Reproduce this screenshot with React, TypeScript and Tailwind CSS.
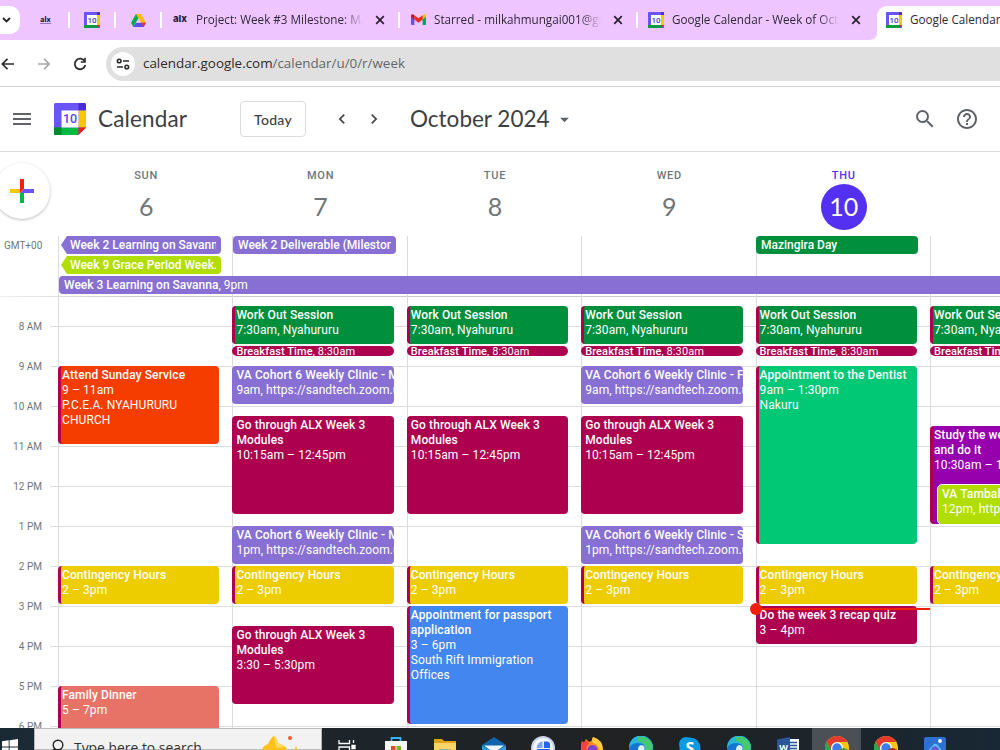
import type { ReactNode } from 'react';
import clsx from 'clsx';
import { MdArrowDropDown, MdChevronLeft, MdChevronRight, MdHelpOutline, MdMenu, MdSearch } from 'react-icons/md';

type CalEvent = {
  title: string;
  detail?: string;
  place?: string;
  start: number;
  end: number;
  color: string;
  stripe?: boolean;
  inline?: boolean;
  nested?: boolean;
};

type Day = { name: string; date: number; today?: boolean; events: CalEvent[] };

const CRIMSON = 'bg-[#ad004e]';
const PURPLE = 'bg-[#876fd3]';
const GREEN = 'bg-[#008f3c]';
const YELLOW = 'bg-[#eecd00]';

const FIRST_HOUR = 7.25;

const workout: CalEvent = { title: 'Work Out Session', detail: '7:30am, Nyahururu', start: 7.5, end: 8.5, color: GREEN, stripe: true };
const breakfast: CalEvent = { title: 'Breakfast Time', detail: ', 8:30am', start: 8.5, end: 8.75, color: CRIMSON, inline: true };
const modules: CalEvent = { title: 'Go through ALX Week 3 Modules', detail: '10:15am – 12:45pm', start: 10.25, end: 12.75, color: CRIMSON };
const contingency: CalEvent = { title: 'Contingency Hours', detail: '2 – 3pm', start: 14, end: 15, color: YELLOW, stripe: true };

const clinic = (start: number, time: string, suffix: string): CalEvent => ({
  title: `VA Cohort 6 Weekly Clinic - ${suffix}`,
  detail: `${time}, https://sandtech.zoom.us`,
  start,
  end: start + 1,
  color: PURPLE,
});

const days: Day[] = [
  {
    name: 'SUN',
    date: 6,
    events: [
      { title: 'Attend Sunday Service', detail: '9 – 11am', place: 'P.C.E.A. NYAHURURU CHURCH', start: 9, end: 11, color: 'bg-[#f63d00]', stripe: true },
      contingency,
      { title: 'Family Dinner', detail: '5 – 7pm', start: 17, end: 19, color: 'bg-[#e67365]', stripe: true },
    ],
  },
  {
    name: 'MON',
    date: 7,
    events: [
      workout,
      breakfast,
      clinic(9, '9am', 'M'),
      modules,
      clinic(13, '1pm', 'M'),
      contingency,
      { title: 'Go through ALX Week 3 Modules', detail: '3:30 – 5:30pm', start: 15.5, end: 17.5, color: CRIMSON },
    ],
  },
  {
    name: 'TUE',
    date: 8,
    events: [
      workout,
      breakfast,
      modules,
      contingency,
      { title: 'Appointment for passport application', detail: '3 – 6pm', place: 'South Rift Immigration Offices', start: 15, end: 18, color: 'bg-[#4386ef]', stripe: true },
    ],
  },
  {
    name: 'WED',
    date: 9,
    events: [workout, breakfast, clinic(9, '9am', 'F'), modules, clinic(13, '1pm', 'S'), contingency],
  },
  {
    name: 'THU',
    date: 10,
    today: true,
    events: [
      workout,
      breakfast,
      { title: 'Appointment to the Dentist', detail: '9am – 1:30pm', place: 'Nakuru', start: 9, end: 13.5, color: 'bg-[#00c875]', stripe: true },
      contingency,
      { title: 'Do the week 3 recap quiz', detail: '3 – 4pm', start: 15, end: 16, color: CRIMSON },
    ],
  },
  {
    name: 'FRI',
    date: 11,
    events: [
      workout,
      breakfast,
      { title: 'Study the week 3 materials and do it', detail: '10:30am – 1pm', start: 10.5, end: 13, color: 'bg-[#9600ad]', stripe: true },
      { title: 'VA Tambali', detail: '12pm, https://sandtech', start: 12, end: 13, color: 'bg-[#b1dd00]', nested: true },
      contingency,
    ],
  },
];

const hours = ['8 AM', '9 AM', '10 AM', '11 AM', '12 PM', '1 PM', '2 PM', '3 PM', '4 PM', '5 PM', '6 PM'];

function CalendarLogo() {
  return (
    <svg width="32" height="32" viewBox="0 0 32 32" className="shrink-0">
      <rect width="32" height="32" rx="1.5" fill="#6a55f8" />
      <path d="M24.5 0H30.5A1.5 1.5 0 0 1 32 1.5V7.5H24.5Z" fill="#4a2bd6" />
      <rect x="24.5" y="7.5" width="7.5" height="17" fill="#f5c800" />
      <path d="M0 24.5H24.5V32H1.5A1.5 1.5 0 0 1 0 30.5Z" fill="#00b944" />
      <path d="M0 24.5H7.5V32H1.5A1.5 1.5 0 0 1 0 30.5Z" fill="#008a2c" />
      <path d="M32 24.5V32H24.5Z" fill="#fff" />
      <path d="M24.5 24.5H32L24.5 32Z" fill="#f4200c" />
      <rect x="7.5" y="7.5" width="17" height="17" fill="#fff" />
      <text x="16" y="20.3" textAnchor="middle" fontSize="12.5" fontFamily="Roboto, sans-serif" fontWeight="500" fill="#5a43ee">
        10
      </text>
    </svg>
  );
}

function CalendarFavicon() {
  return (
    <svg width="16" height="16" viewBox="0 0 16 16" className="shrink-0">
      <rect width="16" height="16" rx=".5" fill="#6a55f8" />
      <path d="M13 0H15.500L16 .5V3H13Z" fill="#4a2bd6" />
      <rect x="13" y="3" width="3" height="10" fill="#f5c800" />
      <rect y="13" width="13" height="3" fill="#0a9c44" />
      <path d="M13 13H16L13 16Z" fill="#f4200c" />
      <rect x="3" y="3" width="10" height="10" fill="#fff" />
      <text x="8" y="10.900" textAnchor="middle" fontSize="8" fontFamily="Roboto, sans-serif" fontWeight="500" fill="#4034c8">
        10
      </text>
    </svg>
  );
}

function GmailLogo() {
  return (
    <svg width="15" height="11" viewBox="0 0 15 11">
      <path d="M0 2V10Q0 11 1 11H3.4V4.2Z" fill="#6a4df5" />
      <path d="M15 2V10Q15 11 14 11H11.6V4.2Z" fill="#00a94f" />
      <path d="M11.6 1.2V5.5L15 3V1.6Q14.5-.6 12.6.5Z" fill="#f5c400" />
      <path d="M3.4 5.6V1.2L7.5 4.3L11.6 1.2V5.6L7.5 8.7Z" fill="#ee2a1c" />
      <path d="M0 3L3.4 5.6V1.2L2.4.5Q.4-.6 0 1.6Z" fill="#c01525" />
    </svg>
  );
}

function DriveLogo() {
  return (
    <svg width="15" height="13" viewBox="0 0 15 13">
      <path d="M5 0H10L5 8.5L2.4 13L0 8.7Z" fill="#00ac47" />
      <path d="M5 0H10L15 8.7H10Z" fill="#fbbc04" />
      <path d="M2.4 13L5 8.7H15L12.6 13Z" fill="#5b4bf5" />
      <path d="M10 8.7H15L12.6 13Z" fill="#ea3323" />
      <path d="M7.5 4.4L10 8.7H5Z" fill="#efc5ff" />
    </svg>
  );
}

function AlxMark({ underline }: { underline?: boolean }) {
  return (
    <span
      className={clsx(
        'font-[Inter,sans-serif] font-extrabold leading-none text-[#231d45]',
        underline ? 'border-b border-[#8a78c8] text-[7px]' : 'pb-0.5 text-[9.5px]',
      )}
    >
      alx
    </span>
  );
}

function CloseIcon() {
  return (
    <svg width="10" height="10" viewBox="0 0 10 10" className="shrink-0">
      <path d="M1.2 1.2L8.8 8.8M8.8 1.2L1.2 8.8" stroke="#2a2030" strokeWidth="1.7" />
    </svg>
  );
}

const TabLine = () => <div className="h-4 w-0.5 shrink-0 bg-white" />;

function TabTitle({ title }: { title: string }) {
  return (
    <div className="w-[167px] overflow-hidden whitespace-nowrap text-[11.7px] [mask-image:linear-gradient(to_right,black_88%,transparent)]">
      {title}
    </div>
  );
}

function Tab({ icon, title }: { icon: ReactNode; title: string }) {
  return (
    <div className="flex w-[236px] shrink-0 items-center pl-[11px]">
      <div className="flex w-[23px] items-center">{icon}</div>
      <TabTitle title={title} />
      <div className="ml-3">
        <CloseIcon />
      </div>
    </div>
  );
}

function TabStrip() {
  return (
    <div className="flex h-10 shrink-0 items-center bg-[#efc5ff] font-['Open_Sans',sans-serif] text-[#2f2838]">
      <div className="flex h-7 w-5 shrink-0 items-center rounded-r-[10px] bg-white pl-0.5">
        <svg width="9" height="6" viewBox="0 0 9 6">
          <path d="M1 1L4.5 4.5L8 1" fill="none" stroke="#222" strokeWidth="1.8" />
        </svg>
      </div>
      <div className="flex w-12 shrink-0 justify-center pl-[3px]">
        <AlxMark underline />
      </div>
      <TabLine />
      <div className="flex w-11 shrink-0 justify-center">
        <CalendarFavicon />
      </div>
      <TabLine />
      <div className="flex w-11 shrink-0 justify-center">
        <DriveLogo />
      </div>
      <TabLine />
      <Tab icon={<AlxMark />} title="Project: Week #3 Milestone: Man" />
      <TabLine />
      <Tab icon={<GmailLogo />} title="Starred - milkahmungai001@gma" />
      <TabLine />
      <div className="flex w-[240px] shrink-0 items-center pl-[10px]">
        <div className="w-6">
          <CalendarFavicon />
        </div>
        <TabTitle title="Google Calendar - Week of Octo" />
        <div className="ml-3">
          <CloseIcon />
        </div>
      </div>
      <svg width="10" height="10" viewBox="0 0 10 10" className="-ml-2.5 -mr-px shrink-0 self-end">
        <path d="M10 0V10H0Q10 10 10 0Z" fill="#fff" />
      </svg>
      <div className="mt-1.5 flex h-[34px] flex-1 items-center overflow-hidden whitespace-nowrap rounded-tl-[10px] bg-white pb-1.5 pl-[9px] text-[11.7px]">
        <CalendarFavicon />
        <span className="ml-2">Google Calendar - Week</span>
      </div>
    </div>
  );
}

function AddressBar() {
  return (
    <div className="flex h-[47px] shrink-0 items-center border-b border-[#cfcfcf] bg-white pt-px">
      <div className="flex w-[106px] items-center">
        <svg width="14" height="14" viewBox="0 0 14 14">
          <path d="M14 7H2.5M7.5 1.8L2.3 7L7.5 12.2" fill="none" stroke="#2b2b2b" strokeWidth="1.7" />
        </svg>
        <svg width="13" height="14" viewBox="0 0 13 14" className="ml-6">
          <path d="M0 7H11M6 1.8L11.2 7L6 12.2" fill="none" stroke="#a5a5a5" strokeWidth="1.6" />
        </svg>
        <svg width="14" height="14" viewBox="0 0 14 14" className="ml-[22px]">
          <path d="M11.7 4.3A5.3 5.3 0 1 0 12.3 8" fill="none" stroke="#2b2b2b" strokeWidth="1.8" />
          <path d="M12.8.8V5.8H7.8V4.2H11.2V.8Z" fill="#2b2b2b" />
        </svg>
      </div>
      <div className="flex h-[34px] flex-1 items-center rounded-l-full bg-[#e0e0e0] pl-[5px]">
        <div className="flex size-6 items-center justify-center rounded-full bg-white">
          <svg width="14" height="12" viewBox="0 0 14 12" fill="none" stroke="#2b2b2b" strokeWidth="1.6">
            <circle cx="3.2" cy="3" r="1.8" />
            <path d="M7 3H13M1 9H7" />
            <circle cx="10.8" cy="9" r="1.8" />
          </svg>
        </div>
        <span className="ml-2 font-['Open_Sans',sans-serif] text-[13.4px] text-[#2b2b2b]">
          calendar.google.com<span className="text-[#666]">/calendar/u/0/r/week</span>
        </span>
      </div>
    </div>
  );
}

function AppHeader() {
  return (
    <header className="flex h-[65px] shrink-0 items-center border-b border-[#dadce0] font-[Lato,sans-serif] text-[#3c4043]">
      <MdMenu className="ml-2.5 size-6 text-[#5f6368]" />
      <div className="ml-5 flex items-center">
        <CalendarLogo />
        <h1 className="ml-3 w-[142px] text-[22.5px] tracking-[0.15px]">Calendar</h1>
      </div>
      <button className="h-9 w-[66px] rounded border border-[#dadce0] text-[14px] font-medium tracking-[0.3px]">Today</button>
      <MdChevronLeft className="ml-[26px] size-5 text-[#444]" />
      <MdChevronRight className="ml-3 size-5 text-[#444]" />
      <h2 className="ml-[26px] w-[143px] whitespace-nowrap text-[22.5px]">October 2024</h2>
      <MdArrowDropDown className="ml-px size-[21px] text-[#5f6368]" />
      <div className="ml-auto flex items-center gap-[18px] pr-[21px] text-[#5f6368]">
        <MdSearch className="size-6" />
        <MdHelpOutline className="size-6" />
      </div>
    </header>
  );
}

function AllDayChip({ title, className }: { title: string; className: string }) {
  return (
    <div className={clsx('h-[18px] rounded-[4px] pr-[5px] text-[12px] font-medium leading-[18px] text-white', className)}>
      <div className="overflow-hidden whitespace-nowrap">{title}</div>
    </div>
  );
}

function WeekHeader() {
  return (
    <div className="relative shrink-0">
      <div className="flex h-21">
        <div className="w-[58px] shrink-0 pt-[11px]">
          <div className="-ml-1.5 flex size-14 items-center justify-center rounded-full bg-white shadow-[0_1px_3px_rgba(60,64,67,0.35)]">
            <svg width="24" height="24" viewBox="0 0 24 24">
              <path d="M0 10H10V14H0Z" fill="#f5c800" />
              <path d="M10 0H14V10L10 14Z" fill="#f4200c" />
              <path d="M14 10H24V14H10Z" fill="#6a55f8" />
              <path d="M10 14H14V24H10Z" fill="#00b944" />
            </svg>
          </div>
        </div>
        {days.map(day => (
          <div key={day.name} className="flex w-[174.4px] shrink-0 flex-col items-center pl-0.5">
            <div className={clsx('mt-4 text-[11px] font-medium leading-4 tracking-[0.8px]', day.today ? 'text-[#5430f3]' : 'text-[#70757a]')}>
              {day.name}
            </div>
            <div
              className={clsx(
                'flex size-[46px] items-center justify-center rounded-full font-[Lato,sans-serif] text-[25px]',
                day.today ? 'bg-[#5430f3] text-white' : 'text-[#70757a]',
              )}
            >
              {day.date}
            </div>
          </div>
        ))}
      </div>
      <div className="grid h-15">
        <div className="col-start-1 row-start-1 flex">
          <div className="w-[58px] shrink-0 pl-1 text-[10px] leading-[19px] text-[#70757a]">GMT+00</div>
          {days.map(day => (
            <div key={day.name} className="w-[174.4px] shrink-0 border-l border-[#dadce0]" />
          ))}
        </div>
        <div className="col-start-1 row-start-1 flex flex-col gap-0.5 pl-[58px]">
          <div className="flex">
            <AllDayChip title="Week 2 Learning on Savanna" className="ml-[3px] w-40 bg-[#876fd3] pl-[9px] [clip-path:polygon(6px_0,100%_0,100%_100%,6px_100%,0_50%)]" />
            <AllDayChip title="Week 2 Deliverable (Milestone" className="ml-3 w-[163px] bg-[#876fd3] pl-[5px]" />
            <AllDayChip title="Mazingira Day" className="ml-[360px] w-[162px] bg-[#008f3c] pl-[5px]" />
          </div>
          <AllDayChip title="Week 9 Grace Period Week." className="ml-[3px] w-40 bg-[#b1dd00] pl-[9px] [clip-path:polygon(6px_0,100%_0,100%_100%,6px_100%,0_50%)]" />
          <div className="ml-px h-[18px] rounded-l-[4px] bg-[#876fd3] pl-[5px] text-[12px] leading-[18px] text-white">
            <span className="font-medium">Week 3 Learning on Savanna</span>, 9pm
          </div>
        </div>
      </div>
    </div>
  );
}

function EventBlock({ event }: { event: CalEvent }) {
  const row = (event.start - FIRST_HOUR) * 4 + 1;
  const span = (event.end - event.start) * 4;
  const style = { gridRow: `${row} / span ${span}` };

  if (event.inline) {
    return (
      <div
        style={style}
        className={clsx('col-start-1 w-[161.4px] overflow-hidden whitespace-nowrap rounded-full pl-1 text-[11px] leading-[11px] tracking-[0.1px] text-white', event.color)}
      >
        <span className="font-medium">{event.title}</span>
        {event.detail}
      </div>
    );
  }

  return (
    <div
      style={style}
      className={clsx(
        'col-start-1 mb-0.5 overflow-hidden rounded-[4px] pt-0.5 text-[12px] leading-[15px] tracking-[0.1px] text-white',
        event.color,
        event.stripe ? 'border-l-3 border-[#ad004e] pl-px' : 'pl-1',
        event.nested ? '-mt-px ml-[8px] w-[153px] outline outline-white' : 'w-[161.4px]',
      )}
    >
      <div className={clsx('font-medium', span <= 4 && 'whitespace-nowrap')}>{event.title}</div>
      <div className="whitespace-nowrap">{event.detail}</div>
      {event.place && <div>{event.place}</div>}
    </div>
  );
}

function WeekGrid() {
  return (
    <div className="grid h-[432px] shrink-0 overflow-hidden">
      <div className="col-start-1 row-start-1 flex h-[432px] overflow-hidden">
        <div className="w-[50px] shrink-0 pr-2 pt-2.5 text-right text-[10px] text-[#70757a]">
          {hours.map(hour => (
            <div key={hour} className="flex h-10 items-center justify-end">
              {hour}
            </div>
          ))}
        </div>
        <div className="flex-1 pt-[30px]">
          {hours.map(hour => (
            <div key={hour} className="h-10 border-t border-[#dadce0]" />
          ))}
        </div>
      </div>
      <div className="col-start-1 row-start-1 flex h-[432px] overflow-hidden pl-[58px]">
        {days.map(day => (
          <div key={day.name} className="relative w-[174.4px] shrink-0 border-l border-[#dadce0]">
            <div className="-ml-px grid auto-rows-[10px]">
              {day.events.map(event => (
                <EventBlock key={`${event.title}-${event.start}`} event={event} />
              ))}
            </div>
            {day.today && (
              <div className="absolute -left-px top-[307px] flex h-3 w-[174.4px] items-center">
                <div className="absolute -left-1.5 size-3 rounded-full bg-[#f01f0c]" />
                <div className="h-0.5 w-full bg-[#f01f0c]" />
              </div>
            )}
          </div>
        ))}
      </div>
      <div className="col-start-1 row-start-1 h-px bg-linear-to-r from-[#eeeeee] to-[#c8c8c8] to-15%" />
    </div>
  );
}

function EdgeIcon() {
  return (
    <svg width="24" height="24" viewBox="0 0 24 24">
      <circle cx="12" cy="12" r="12" fill="#1277cf" />
      <path d="M0 12A12 12 0 0 1 24 11Q24 17 17 17Q14 16 16 13Q16 7 9 7Q3 7 0 12Z" fill="#29b6d8" />
      <path d="M9 1Q20-1 24 10Q24 17 17 17Q14 16 16 13Q17 7 9 5Z" fill="#45c86e" />
      <path d="M9 14Q9 9 13 9Q16 10 15.500 13Q13 17 18 19Q10 21 9 14Z" fill="#dff3ff" />
    </svg>
  );
}

function ChromeIcon({ badge }: { badge: string }) {
  return (
    <svg width="24" height="24" viewBox="0 0 24 24">
      <circle cx="12" cy="12" r="12" fill="#f9c513" />
      <path d="M1.6 6A12 12 0 0 1 22.4 6H12L6.800 15Z" fill="#e33b2e" />
      <path d="M1.6 6L7 15L12 24A12 12 0 0 1 1.6 6Z" fill="#2da44e" />
      <circle cx="12" cy="12" r="6" fill="#fff" />
      <circle cx="12" cy="12" r="4.700" fill="#3b7ded" />
      <circle cx="18.500" cy="18" r="6" fill={badge} />
    </svg>
  );
}

const taskbarIcons: ReactNode[] = [
  <svg width="18" height="20" viewBox="0 0 18 20" className="mt-1" fill="none" stroke="#fff" strokeWidth="1.3">
    <path d="M1 0V3.500H11.500V0M1 19V7H11.500V19M15.500 0V3M15.500 11V19" />
    <path d="M14 5.500H17V8.500H14Z" fill="#fff" />
  </svg>,
  <svg width="24" height="24" viewBox="0 0 24 24">
    <path d="M7.500 6V2H16.500V6" fill="none" stroke="#30b5f0" strokeWidth="1.800" />
    <path d="M1 5H23V24H1Z" fill="#f7f7f7" />
    <path d="M7 10H11.500V14.500H7Z" fill="#e84a27" />
    <path d="M12.500 10H17V14.500H12.500Z" fill="#76b82a" />
  </svg>,
  <svg width="22" height="22" viewBox="0 0 22 22" className="mt-0.5">
    <path d="M0 1H8L10 3H22V22H0Z" fill="#e1a21c" />
    <path d="M0 5H22V22H0Z" fill="#fbd667" />
    <path d="M5 11.500H17V22H5Z" fill="#3d89c9" />
  </svg>,
  <svg width="24" height="24" viewBox="0 0 24 24">
    <path d="M0 9L12 1L24 9V24H0Z" fill="#0f64ad" />
    <path d="M2 9.500H22L12 17Z" fill="#eef6fd" />
    <path d="M0 9.500L12 17L24 9.500V24H0Z" fill="#2f9fe4" />
  </svg>,
  <svg width="24" height="24" viewBox="0 0 24 24">
    <circle cx="12" cy="12" r="12" fill="#c9d1e6" />
    <circle cx="12" cy="12" r="10" fill="#f3f6fd" />
    <path d="M13 5.500H16A3 3 0 0 1 19 8.500V12H13Z" fill="#2667e8" />
    <path d="M11.500 5.500A6 6 0 0 0 6 12H11.500Z" fill="#7ea5f4" />
    <path d="M6 13H19A7 7 0 0 1 6 13Z" fill="#2452c8" />
  </svg>,
  <svg width="24" height="24" viewBox="0 0 24 24">
    <path d="M2 5L4 7L6 3L9 6Q13 5 13 1Q23 4 23 14Q22 24 12 24Q1 23 1 13Q1 8 2 5Z" fill="#ff8a1e" />
    <path d="M13 1Q23 4 23 14L20 18Q20 9 13 7Q11 4 13 1Z" fill="#ffcd3d" />
    <path d="M2 5L4 7L6 4L9 7L6 12L9 16L3 19Q0 12 2 5Z" fill="#f4433c" />
    <circle cx="12.500" cy="14" r="5" fill="#7a44d8" />
  </svg>,
  <EdgeIcon />,
  <svg width="24" height="24" viewBox="0 0 24 24">
    <circle cx="8" cy="8" r="7" fill="#0a9ce0" />
    <circle cx="12" cy="12" r="10.500" fill="#0a9ce0" />
    <text x="12" y="18" textAnchor="middle" fontSize="16" fontWeight="700" fontFamily="Open Sans, sans-serif" fill="#fff">S</text>
  </svg>,
  <EdgeIcon />,
  <svg width="24" height="24" viewBox="0 0 24 24">
    <path d="M12 3H23V23H12Z" fill="#f4f6fa" />
    <path d="M14 6.500H21M14 9.500H21M14 12.500H21" stroke="#2b579a" strokeWidth="1.300" />
    <path d="M1 3.500L14 1V24L1 22Z" fill="#2b579a" />
    <text x="7.500" y="15" textAnchor="middle" fontSize="9" fontWeight="700" fontFamily="Open Sans, sans-serif" fill="#fff">W</text>
  </svg>,
  <ChromeIcon badge="#4f9a48" />,
  <ChromeIcon badge="#b3261e" />,
  <svg width="22" height="24" viewBox="0 0 22 24">
    <rect y="1" width="22" height="23" rx="2" fill="#2d6fd2" />
    <path d="M0 19L10 8Q13 7 16 12L22 19V24H0Z" fill="#54c4f2" />
    <path d="M7 13Q11 7 15 13L13 20H8Z" fill="#6a5ad8" />
    <circle cx="16" cy="5" r="1.900" fill="#fff" />
  </svg>,
];

function Taskbar() {
  return (
    <div className="flex h-[22px] shrink-0 overflow-hidden bg-linear-to-r from-[#1a2a34] via-[#202122] via-65% to-[#182834]">
      <div className="w-[34px] shrink-0 pl-0.5 pt-[11px]">
        <svg width="16" height="16" viewBox="0 0 16 16" fill="#fff">
          <path d="M0 2.300L6.700 1.300V7.500H0ZM7.600 1.200L16 0V7.500H7.600ZM0 8.400H6.700V14.700L0 13.700ZM7.600 8.400H16V16L7.600 14.800Z" />
        </svg>
      </div>
      <div className="flex w-[288px] shrink-0 items-start border border-[#b8b8b8] bg-[#f2f2f2] pl-[15px]">
        <svg width="14" height="18" viewBox="0 0 14 18" className="mt-2.5 shrink-0" fill="none" stroke="#222" strokeWidth="1.400">
          <circle cx="8" cy="6" r="4.800" />
          <path d="M4.800 9.500L0 15" />
        </svg>
        <span className="ml-2.5 mt-[9px] w-[188px] whitespace-nowrap font-['Open_Sans',sans-serif] text-[13.9px] leading-5 text-[#333]">Type here to search</span>
        <svg width="40" height="22" viewBox="0 0 40 22" className="mt-[6px] shrink-0">
          <path d="M12 1Q14 1 16 8L24 12Q26 14 20 16L16 22H6L1 15Q-1 12 6 9Q10 1 12 1Z" fill="#fbc21e" />
          <path d="M12 1Q14 1 16 8L24 12L14 13Z" fill="#ffda5b" />
          <circle cx="28" cy="3" r="2" fill="#ef5c22" />
          <path d="M34 11L36 15L39 17H31Z" fill="#fbc93a" />
        </svg>
      </div>
      {taskbarIcons.map((icon, i) => (
        <div key={i} className={clsx('flex w-[49px] shrink-0 items-start justify-center pt-2', i === 10 && 'bg-[#4a5056]', i > 3 && 'pl-px')}>
          {icon}
        </div>
      ))}
      <div className="flex-1" />
    </div>
  );
}

export default function App() {
  return (
    <div className="flex h-[750px] w-[1000px] flex-col overflow-hidden bg-white font-[Roboto,sans-serif]">
      <TabStrip />
      <AddressBar />
      <AppHeader />
      <WeekHeader />
      <WeekGrid />
      <Taskbar />
    </div>
  );
}
